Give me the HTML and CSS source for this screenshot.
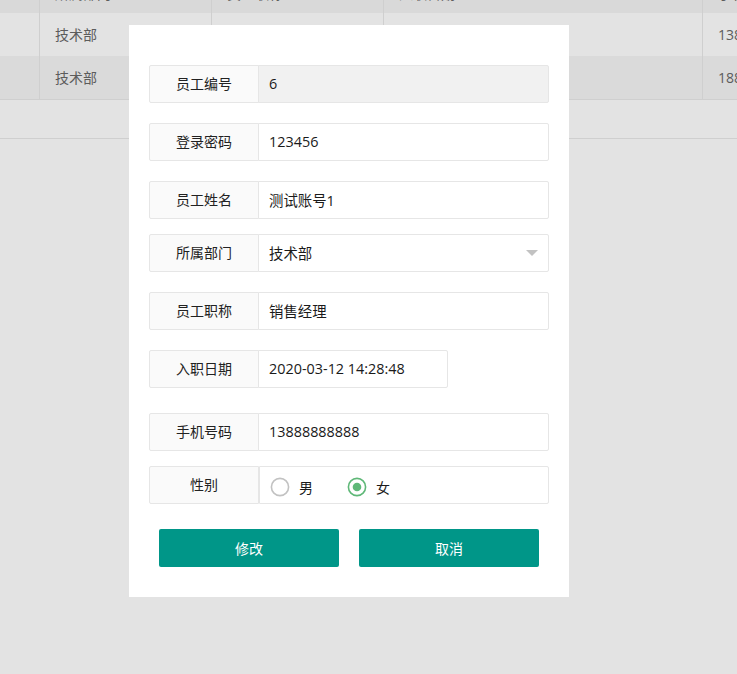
FILE: index.html
```html
<!DOCTYPE html>
<html lang="zh">
<head>
<meta charset="utf-8">
<title>修改员工</title>
<link rel="stylesheet" href="styles.css">
</head>
<body>
<div class="table">
  <div class="tr th">
    <div class="td c1"></div>
    <div class="td c2">所属部门</div>
    <div class="td c3">员工职称</div>
    <div class="td c4">入职日期</div>
    <div class="td c5">手机号码</div>
  </div>
  <div class="tr">
    <div class="td c1"></div>
    <div class="td c2">技术部</div>
    <div class="td c3"></div>
    <div class="td c4"></div>
    <div class="td c5">13888888888</div>
  </div>
  <div class="tr hover">
    <div class="td c1"></div>
    <div class="td c2">技术部</div>
    <div class="td c3"></div>
    <div class="td c4"></div>
    <div class="td c5">18888888888</div>
  </div>
  <div class="pager"></div>
</div>

<div class="modal">
  <form class="form">
    <div class="item g20">
      <label class="label">员工编号</label>
      <div class="input readonly">6</div>
    </div>
    <div class="item g20">
      <label class="label">登录密码</label>
      <div class="input">123456</div>
    </div>
    <div class="item g15">
      <label class="label">员工姓名</label>
      <div class="input">测试账号1</div>
    </div>
    <div class="item g20">
      <label class="label">所属部门</label>
      <div class="input select"><span>技术部</span><i class="caret"></i></div>
    </div>
    <div class="item g20">
      <label class="label">员工职称</label>
      <div class="input">销售经理</div>
    </div>
    <div class="item g25">
      <label class="label">入职日期</label>
      <div class="input inline">2020-03-12 14:28:48</div>
    </div>
    <div class="item g15">
      <label class="label">手机号码</label>
      <div class="input">13888888888</div>
    </div>
    <div class="item g25">
      <label class="label">性别</label>
      <div class="input radios">
        <span class="radio">
          <svg width="20" height="20" viewBox="0 0 20 20"><circle cx="10" cy="10" r="8.6" fill="none" stroke="#c2c2c2" stroke-width="1.6"/></svg>
          <span>男</span>
        </span>
        <span class="radio">
          <svg width="20" height="20" viewBox="0 0 20 20"><circle cx="10" cy="10" r="8.6" fill="none" stroke="#5FB878" stroke-width="1.6"/><circle cx="10" cy="10" r="4.3" fill="#5FB878"/></svg>
          <span>女</span>
        </span>
      </div>
    </div>
    <div class="buttons">
      <button type="button" class="btn">修改</button>
      <button type="button" class="btn">取消</button>
    </div>
  </form>
</div>
</body>
</html>
```

FILE: styles.css
```css
* { box-sizing: border-box; }

html, body {
  margin: 0;
  padding: 0;
}

body {
  width: 737px;
  height: 674px;
  overflow: hidden;
  background: #e3e3e3;
  font-family: "Open Sans", "Noto Sans CJK SC", sans-serif;
  font-size: 14px;
  color: #333;
}

/* background table (under the shade) */
.table {
  margin-top: -25px;
  width: 760px;
}

.tr {
  display: flex;
  height: 43px;
  background: #e3e3e3;
}

.tr.th {
  height: 38px;
  background: #d9d9d9;
}

.tr.hover {
  background: #dadada;
  border-bottom: 1px solid #cfcfcf;
  height: 44px;
}

.td {
  display: flex;
  align-items: center;
  padding-left: 15px;
  color: #5c5c5c;
  border-right: 1px solid #cfcfcf;
  white-space: nowrap;
  overflow: hidden;
  line-height: 20px;
}

.th .td {
  align-items: flex-start;
  padding-top: 9px;
}

.c1 { width: 40px; }
.c2 { width: 172px; }
.c3 { width: 172px; }
.c4 { width: 319px; }
.c5 { width: 57px; border-right: none; }

.pager {
  height: 39px;
  border-bottom: 1px solid #cfcfcf;
}

/* modal layer */
.modal {
  position: absolute;
  left: 129px;
  top: 25px;
  width: 440px;
  height: 572px;
  background: #fff;
  padding: 40px 20px 30px;
}

.item {
  display: flex;
  height: 38px;
}

.g15 { margin-bottom: 15px; }
.g20 { margin-bottom: 20px; }
.g25 { margin-bottom: 25px; }

.label {
  flex: none;
  width: 110px;
  height: 38px;
  border: 1px solid #e6e6e6;
  border-radius: 2px 0 0 2px;
  background: #fafafa;
  text-align: center;
  line-height: 20px;
  padding: 7px 0 9px;
  color: #222;
  font-family: "Noto Sans CJK SC", sans-serif;
}

.input {
  flex: 1;
  margin-left: -1px;
  height: 38px;
  border: 1px solid #e6e6e6;
  border-radius: 0 2px 2px 0;
  padding-left: 10px;
  padding-bottom: 1px;
  display: flex;
  align-items: center;
  color: #1a1a1a;
  background: #fff;
  font-size: 14.4px;
}

.input.readonly {
  background: #f1f1f1;
}

.input.inline {
  flex: none;
  width: 190px;
}

.select {
  padding-right: 10px;
}

.caret {
  margin-left: auto;
  width: 0;
  height: 0;
  border-top: 6px solid #c2c2c2;
  border-left: 6px solid transparent;
  border-right: 6px solid transparent;
}

.radios {
  margin-left: 0;
  padding-left: 10px;
  padding-top: 4px;
  font-size: 14px;
}

.radio {
  display: inline-flex;
  align-items: center;
  margin-right: 34px;
  font-family: "Noto Sans CJK SC", sans-serif;
  color: #1a1a1a;
}

.radio svg {
  display: block;
  margin-right: 9px;
}

.buttons {
  display: flex;
  justify-content: center;
  gap: 20px;
}

.btn {
  width: 180px;
  height: 38px;
  border: none;
  border-radius: 2px;
  background: #009688;
  color: #fff;
  font-family: "Noto Sans CJK SC", sans-serif;
  font-size: 14px;
  padding: 0;
}
```
